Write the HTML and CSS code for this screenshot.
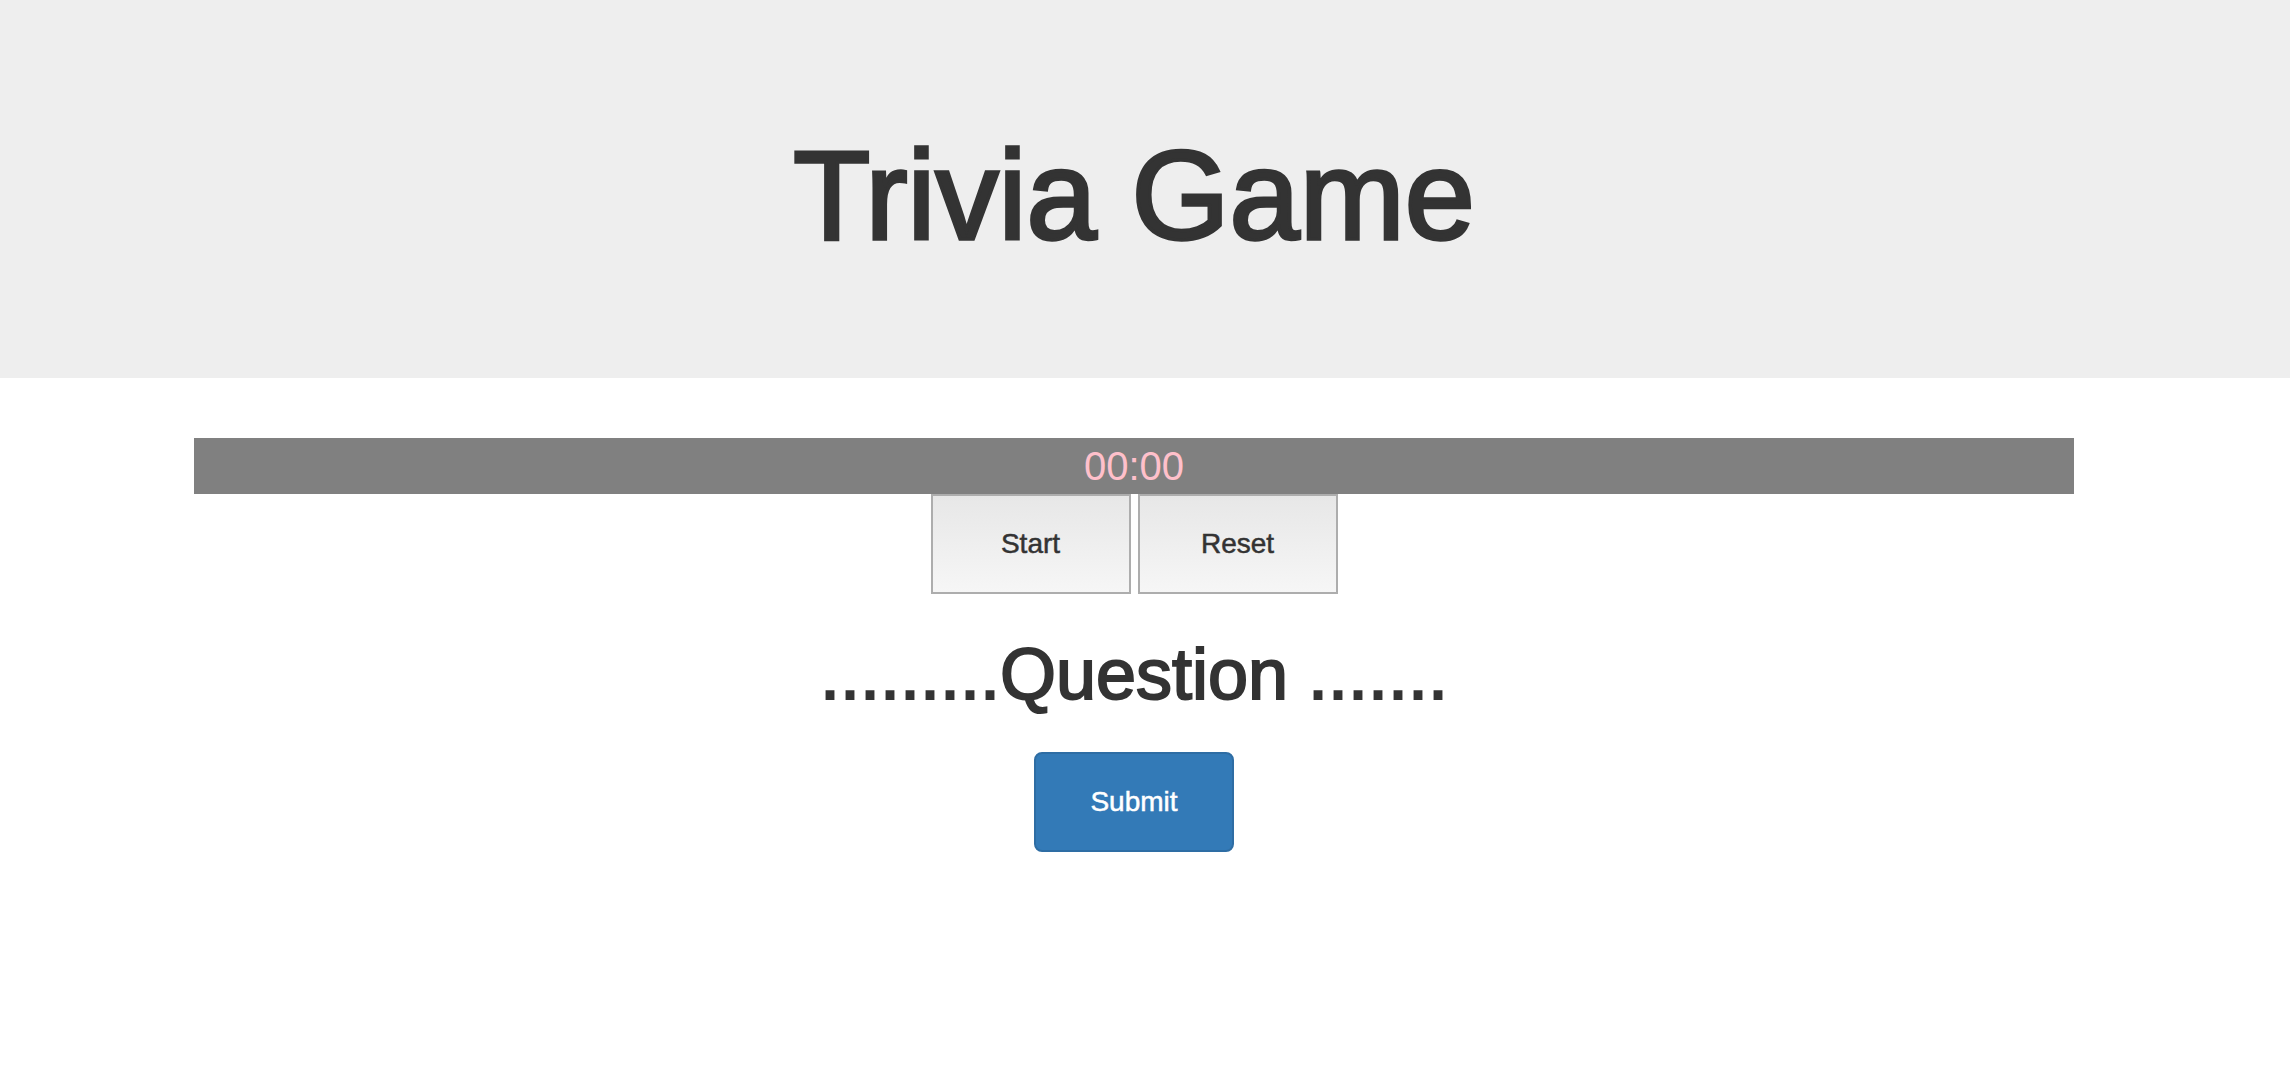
FILE: index.html
```html
<!DOCTYPE html>
<html lang="en">
<head>
<meta charset="utf-8">
<title>Trivia Game</title>
<link rel="stylesheet" href="styles.css">
</head>
<body>
<header class="jumbotron">
  <div class="jumbotron-inner">
    <h1 class="title">Trivia Game</h1>
  </div>
</header>
<div class="page">
  <main class="container">
    <div class="timer">00:00</div>
    <div class="controls">
      <button class="btn-plain" type="button">Start</button>
      <button class="btn-plain" type="button">Reset</button>
    </div>
    <h2 class="question">.........Question .......</h2>
    <div class="submit-row">
      <button class="btn-submit" type="button">Submit</button>
    </div>
  </main>
</div>
</body>
</html>
```

FILE: styles.css
```css
html, body {
  margin: 0;
  padding: 0;
  background: #ffffff;
}

body {
  font-family: "Liberation Sans", Arial, Helvetica, sans-serif;
  color: #333333;
}

.jumbotron {
  background: #eeeeee;
  padding: 126px 0 113px;
}

.jumbotron-inner {
  margin-right: 22px;
  text-align: center;
}

.title {
  margin: 0;
  font-size: 126px;
  line-height: 139px;
  font-weight: normal;
  color: #333333;
  -webkit-text-stroke: 3.5px #333333;
}

.page {
  margin-right: 22px;
  padding-top: 60px;
}

.container {
  width: 1880px;
  margin: 0 auto;
}

.timer {
  height: 56px;
  line-height: 56px;
  background: #808080;
  color: #ffc0cb;
  font-size: 40px;
  text-align: center;
}

.controls {
  display: flex;
  justify-content: center;
  gap: 7px;
}

.btn-plain {
  box-sizing: border-box;
  width: 200px;
  height: 100px;
  margin: 0;
  padding: 0;
  border: 2px solid #adadad;
  background: linear-gradient(#e7e7e7, #f6f6f6);
  font-family: "Liberation Sans", Arial, Helvetica, sans-serif;
  font-size: 28px;
  color: #333333;
  -webkit-text-stroke: 0.5px #333333;
}

.question {
  margin: 41px 0 0;
  font-size: 72px;
  line-height: 79px;
  font-weight: normal;
  text-align: center;
  color: #333333;
  -webkit-text-stroke: 2px #333333;
}

.submit-row {
  display: flex;
  justify-content: center;
  margin-top: 38px;
}

.btn-submit {
  box-sizing: border-box;
  width: 200px;
  height: 100px;
  margin: 0;
  padding: 0;
  border: 2px solid #2e6da4;
  border-radius: 8px;
  background: #337ab7;
  color: #ffffff;
  font-family: "Liberation Sans", Arial, Helvetica, sans-serif;
  font-size: 28px;
  -webkit-text-stroke: 0.5px #ffffff;
}
```
